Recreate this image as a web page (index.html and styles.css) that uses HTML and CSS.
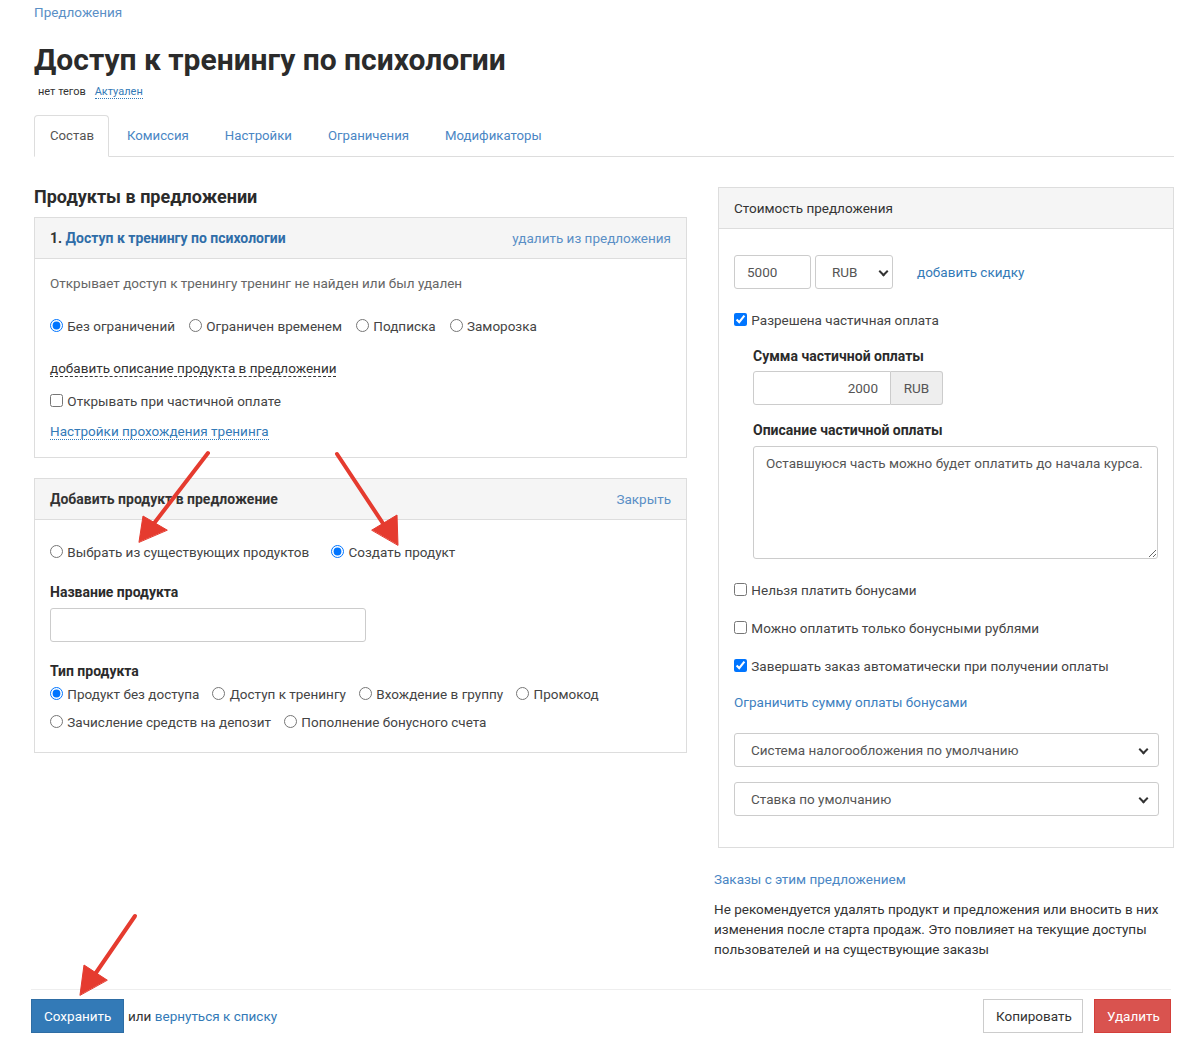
FILE: index.html
```html
<!DOCTYPE html>
<html lang="ru">
<head>
    <meta charset="UTF-8">
    <title>Доступ к тренингу по психологии</title>
    <link rel="stylesheet" href="styles.css">
</head>
<body>
    <div class="page">
        <div class="breadcrumb"><a href="#">Предложения</a></div>

        <h1>Доступ к тренингу по психологии</h1>
        <div class="tags">
            <span>нет тегов</span>
            <a href="#" class="dotted">Актуален</a>
        </div>

        <ul class="tabs">
            <li class="active"><a href="#">Состав</a></li>
            <li><a href="#">Комиссия</a></li>
            <li><a href="#">Настройки</a></li>
            <li><a href="#">Ограничения</a></li>
            <li><a href="#">Модификаторы</a></li>
        </ul>

        <div class="columns">
            <div class="col-left">
                <h3 class="section-title">Продукты в предложении</h3>

                <div class="panel">
                    <div class="panel-heading">
                        <span class="panel-title">1. <a href="#">Доступ к тренингу по психологии</a></span>
                        <a href="#" class="muted-link">удалить из предложения</a>
                    </div>
                    <div class="panel-body p1">
                        <div class="row r1 gray">Открывает доступ к тренингу тренинг не найден или был удален</div>
                        <div class="row r2 radios">
                            <label><input type="radio" name="lim" checked> Без ограничений</label>
                            <label><input type="radio" name="lim"> Ограничен временем</label>
                            <label><input type="radio" name="lim"> Подписка</label>
                            <label><input type="radio" name="lim"> Заморозка</label>
                        </div>
                        <div class="row r3"><a href="#" class="dashed">добавить описание продукта в предложении</a></div>
                        <div class="row r4"><label><input type="checkbox"> Открывать при частичной оплате</label></div>
                        <div class="row r5"><a href="#" class="dotted">Настройки прохождения тренинга</a></div>
                    </div>
                </div>

                <div class="panel panel-add">
                    <div class="panel-heading">
                        <span class="panel-title">Добавить продукт в предложение</span>
                        <a href="#" class="muted-link">Закрыть</a>
                    </div>
                    <div class="panel-body p2">
                        <div class="row a1 radios wide">
                            <label><input type="radio" name="mode"> Выбрать из существующих продуктов</label>
                            <label><input type="radio" name="mode" checked> Создать продукт</label>
                        </div>
                        <div class="row a2 label-bold">Название продукта</div>
                        <input type="text" class="form-control name-input">
                        <div class="row a3 label-bold">Тип продукта</div>
                        <div class="row a4 radios">
                            <label><input type="radio" name="type" checked> Продукт без доступа</label>
                            <label><input type="radio" name="type"> Доступ к тренингу</label>
                            <label><input type="radio" name="type"> Вхождение в группу</label>
                            <label><input type="radio" name="type"> Промокод</label>
                        </div>
                        <div class="row a5 radios">
                            <label><input type="radio" name="type"> Зачисление средств на депозит</label>
                            <label><input type="radio" name="type"> Пополнение бонусного счета</label>
                        </div>
                    </div>
                </div>
            </div>

            <div class="col-right">
                <div class="panel panel-price">
                    <div class="panel-heading plain">Стоимость предложения</div>
                    <div class="panel-body p3">
                        <div class="price-row">
                            <input type="text" class="form-control price" value="5000">
                            <div class="select-box currency">RUB <span class="chev"></span></div>
                            <a href="#">добавить скидку</a>
                        </div>
                        <div class="row b1"><label><input type="checkbox" checked> Разрешена частичная оплата</label></div>
                        <div class="partial">
                            <div class="row b2 label-bold">Сумма частичной оплаты</div>
                            <div class="input-group">
                                <input type="text" class="form-control sum" value="2000">
                                <span class="addon">RUB</span>
                            </div>
                            <div class="row b3 label-bold">Описание частичной оплаты</div>
                            <textarea class="form-control textarea">Оставшуюся часть можно будет оплатить до начала курса.</textarea>
                        </div>
                        <div class="row b4"><label><input type="checkbox"> Нельзя платить бонусами</label></div>
                        <div class="row b5"><label><input type="checkbox"> Можно оплатить только бонусными рублями</label></div>
                        <div class="row b5"><label><input type="checkbox" checked> Завершать заказ автоматически при получении оплаты</label></div>
                        <div class="row b6"><a href="#">Ограничить сумму оплаты бонусами</a></div>
                        <div class="select-box full s1">Система налогообложения по умолчанию <span class="chev"></span></div>
                        <div class="select-box full s2">Ставка по умолчанию <span class="chev"></span></div>
                    </div>
                </div>

                <div class="notes">
                    <a href="#">Заказы с этим предложением</a>
                    <p>Не рекомендуется удалять продукт и предложения или вносить в них изменения после старта продаж. Это повлияет на текущие доступы пользователей и на существующие заказы</p>
                </div>
            </div>
        </div>
    </div>

    <div class="actions">
        <div class="actions-left">
            <button class="btn btn-primary">Сохранить</button>
            <span>или <a href="#">вернуться к списку</a></span>
        </div>
        <div class="actions-right">
            <button class="btn btn-default">Копировать</button>
            <button class="btn btn-danger">Удалить</button>
        </div>
    </div>

    <!-- стрелки-подсказки поверх скриншота -->
    <svg class="arrows" width="1186" height="1062" viewBox="0 0 1186 1062">
        <g fill="#e53b2f" stroke="#e53b2f" stroke-linecap="round">
            <line x1="208" y1="453" x2="152" y2="526" stroke-width="4"/>
            <polygon points="139,542 143,516 167,530" stroke-width="1"/>
            <line x1="337" y1="454" x2="388" y2="531" stroke-width="4"/>
            <polygon points="398,545 397,515 372,530" stroke-width="1"/>
            <line x1="135" y1="916" x2="91" y2="980" stroke-width="4"/>
            <polygon points="80,995 84,965 107,980" stroke-width="1"/>
        </g>
    </svg>
</body>
</html>
```

FILE: styles.css
```css
body {
    margin: 0;
    font-family: Roboto, "Liberation Sans", sans-serif;
    font-size: 13.5px;
    line-height: 20px;
    color: #333;
    background: #fff;
    position: relative;
}

a {
    color: #337ab7;
    text-decoration: none;
}

.page {
    padding: 0 12px 0 34px;
}

.breadcrumb {
    padding-top: 2px;
    height: 20px;
}

.breadcrumb a {
    color: #5a8fc6;
}

h1 {
    margin: 20px 0 0;
    font-size: 30px;
    line-height: 36px;
    font-weight: 700;
    color: #2b2b2b;
}

.tags {
    margin-top: 7px;
    padding-left: 4px;
    font-size: 11px;
    line-height: 14px;
}

.tags span {
    margin-right: 6px;
}

.dotted {
    border-bottom: 1px dotted #337ab7;
}

.dashed {
    color: #333;
    border-bottom: 1px dashed #333;
}

/* вкладки */
.tabs {
    list-style: none;
    margin: 16px 0 0;
    padding: 0;
    display: flex;
    border-bottom: 1px solid #ddd;
    font-size: 13.2px;
}

.tabs li {
    margin-bottom: -1px;
}

.tabs a {
    display: block;
    padding: 10px 17px 10px 17px;
    line-height: 20px;
    border: 1px solid transparent;
    border-radius: 4px 4px 0 0;
    color: #4a86c4;
}

.tabs .active a {
    padding-left: 15px;
    padding-right: 14px;
    color: #555;
    border-color: #ddd #ddd transparent;
    background: #fff;
}

.columns {
    display: grid;
    grid-template-columns: 653px 460px;
    column-gap: 27px;
    margin-top: 30px;
}

.section-title {
    margin: 0 0 10px;
    font-size: 18px;
    line-height: 20px;
    font-weight: 700;
    color: #2b2b2b;
}

/* панели */
.panel {
    border: 1px solid #ddd;
    background: #fff;
}

.panel-heading {
    display: flex;
    justify-content: space-between;
    align-items: center;
    height: 40px;
    padding: 0 15px;
    background: #f5f5f5;
    border-bottom: 1px solid #ddd;
}

.panel-heading.plain {
    color: #333;
}

.panel-title {
    font-size: 14px;
    font-weight: 700;
    color: #333;
}

.panel-title a {
    color: #2f6da8;
}

.muted-link {
    color: #5a8fc6;
}

.panel-body {
    padding: 0 15px;
}

.row label {
    color: #444;
}

.gray {
    color: #666;
}

.radios {
    display: flex;
    gap: 13px;
}

.p1 .radios {
    gap: 14px;
}

.radios.wide {
    gap: 22px;
}

input[type=radio],
input[type=checkbox] {
    margin: 0 1px 0 0;
    width: 13px;
    height: 13px;
    vertical-align: -1px;
}

.label-bold {
    font-size: 14px;
    font-weight: 700;
    color: #2b2b2b;
}

.p1 { padding-bottom: 16px; }
.p1 .r1 { margin-top: 14px; }
.p1 .r2 { margin-top: 23px; }
.p1 .r3 { margin-top: 22px; }
.p1 .r4 { margin-top: 13px; }
.p1 .r5 { margin-top: 10px; }

.panel-add {
    margin-top: 20px;
}

.p2 { padding-bottom: 20px; }
.p2 .a1 { margin-top: 22px; }
.p2 .a2 { margin-top: 20px; }
.p2 .a3 { margin-top: 19px; }
.p2 .a4 { margin-top: 3px; }
.p2 .a5 { margin-top: 8px; }

.form-control {
    box-sizing: border-box;
    font-family: inherit;
    font-size: 13.5px;
    color: #555;
    border: 1px solid #ccc;
    border-radius: 3px;
    background: #fff;
    padding: 6px 12px;
    height: 34px;
    display: block;
}

.name-input {
    width: 316px;
    margin-top: 6px;
}

/* правая колонка */
.panel-price {
    margin-left: 4px;
}

.p3 { padding: 26px 15px 31px; }

.price-row {
    display: flex;
    align-items: center;
}

.price {
    width: 77px;
    margin-right: 4px;
}

.select-box {
    box-sizing: border-box;
    height: 34px;
    border: 1px solid #ccc;
    border-radius: 3px;
    display: flex;
    align-items: center;
    padding: 0 12px;
    color: #555;
    position: relative;
}

.currency {
    width: 78px;
    padding-left: 16px;
    margin-right: 24px;
}

.chev {
    position: absolute;
    right: 11px;
    top: 12px;
    width: 5px;
    height: 5px;
    border-right: 2px solid #333;
    border-bottom: 2px solid #333;
    transform: rotate(45deg);
}

.currency .chev {
    right: 5px;
}

.b1 { margin-top: 21px; }

.partial {
    padding-left: 19px;
}

.b2 { margin-top: 16px; }

.input-group {
    display: flex;
    width: 190px;
    margin-top: 5px;
}

.sum {
    width: 138px;
    text-align: right;
    border-radius: 3px 0 0 3px;
}

.addon {
    flex: 1;
    box-sizing: border-box;
    height: 34px;
    line-height: 32px;
    text-align: center;
    background: #eee;
    border: 1px solid #ccc;
    border-left: 0;
    border-radius: 0 3px 3px 0;
    color: #555;
}

.b3 { margin-top: 15px; }

.textarea {
    width: 405px;
    height: 113px;
    margin-top: 6px;
    padding: 6px 8px 6px 12px;
    resize: vertical;
    line-height: 20px;
}

.b4 { margin-top: 21px; }
.b5 { margin-top: 18px; }
.b6 { margin-top: 16px; }

.b6 a {
    color: #3d7fc0;
}

.select-box.full {
    width: 425px;
    padding-left: 16px;
}

.s1 { margin-top: 21px; }
.s2 { margin-top: 15px; }

.notes {
    padding-top: 21px;
    padding-right: 12px;
}

.notes a {
    color: #4a86c4;
}

.notes p {
    margin: 10px 0 0;
    color: #333;
    font-size: 13.5px;
}

/* нижняя панель с кнопками */
.actions {
    margin: 30px 15px 0 31px;
    border-top: 1px solid #eee;
    padding-top: 9px;
    display: flex;
    justify-content: space-between;
}

.actions-left {
    display: flex;
    align-items: center;
    gap: 4px;
}

.actions-left span {
    color: #333;
}

.actions-right {
    display: flex;
    gap: 11px;
}

.btn {
    font-family: inherit;
    font-size: 13.5px;
    height: 34px;
    padding: 0 12px;
    border: 1px solid transparent;
    border-radius: 0;
    cursor: pointer;
}

.btn-primary {
    width: 93px;
    background: #337ab7;
    border-color: #2e6da4;
    color: #fff;
}

.btn-default {
    width: 100px;
    background: #fff;
    border-color: #ccc;
    color: #333;
}

.btn-danger {
    width: 77px;
    background: #d9534f;
    border-color: #d43f3a;
    color: #fff;
}

.arrows {
    position: absolute;
    left: 0;
    top: 0;
    pointer-events: none;
}
```
